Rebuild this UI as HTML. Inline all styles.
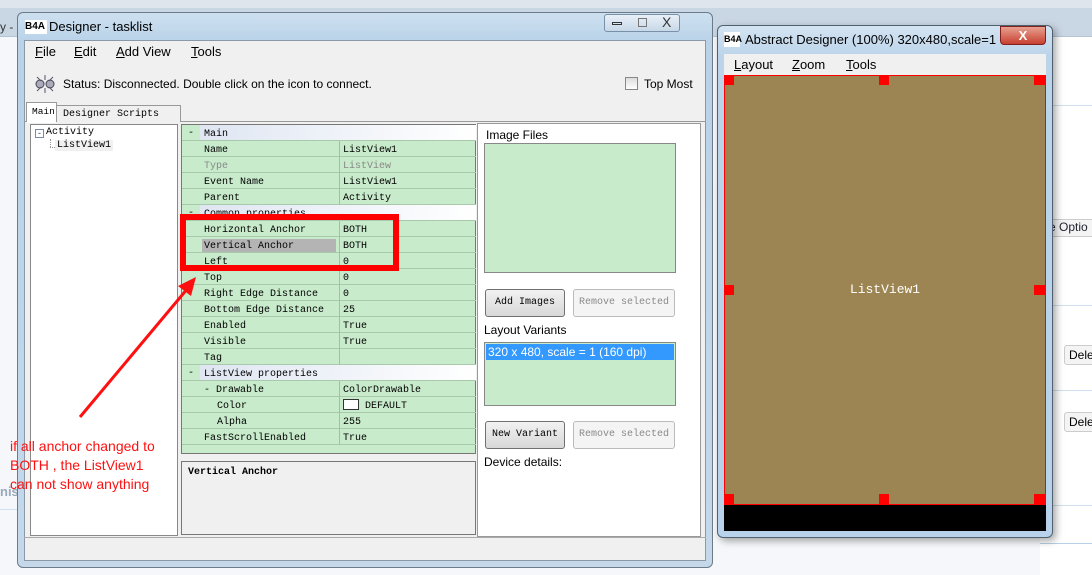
<!DOCTYPE html>
<html><head><meta charset="utf-8"><style>
*{margin:0;padding:0;box-sizing:border-box}
body{width:1092px;height:575px;position:relative;overflow:hidden;background:#f5f7fa;font-family:"Liberation Sans",sans-serif;font-size:12px;color:#000}
.a{position:absolute}
.mono{font-family:"Liberation Mono",monospace;font-size:10px}
.row{position:absolute;left:0;width:294px;height:16px;border-bottom:1px solid #a9c9ad}
.row .n{position:absolute;left:22px;top:4px}
.row .v{position:absolute;left:161px;top:4px}
.row .sep{position:absolute;left:157px;top:0;width:1px;height:16px;background:#a9b9aa}
.hdr{background:linear-gradient(90deg,#c8ebcb 18px,#dfe6f2 18px,#fff);}
.hdr .m{position:absolute;left:6px;top:3px}
.btn{position:absolute;border:1px solid #707070;border-radius:3px;background:linear-gradient(#f2f2f2,#d8d8d8);text-align:center;font-family:"Liberation Mono",monospace;font-size:10px;line-height:25px}
.dis{border-color:#bbb;background:#f4f4f4;color:#8a8a8a}
</style></head><body>
<div class="a" style="left:0;top:0;width:1092px;height:8px;background:#dfe5ec"></div>
<div class="a" style="left:0;top:8px;width:1092px;height:28px;background:#c9d6e3"></div>
<div class="a" style="left:0;top:36px;width:1092px;height:1px;background:#b4c4d4"></div>
<div class="a" style="left:0;top:20px;font-size:12px;color:#333">y -</div>
<div class="a" style="left:1040px;top:37px;width:52px;height:538px;background:#fff"></div>
<div class="a" style="left:1040px;top:105px;width:52px;height:1px;background:#cfe0f0"></div>
<div class="a" style="left:1040px;top:305px;width:52px;height:1px;background:#cfe0f0"></div>
<div class="a" style="left:1040px;top:390px;width:52px;height:1px;background:#cfe0f0"></div>
<div class="a" style="left:1040px;top:505px;width:52px;height:1px;background:#cfe0f0"></div>
<div class="a" style="left:1040px;top:543px;width:52px;height:1px;background:#b8d0e6"></div>
<div class="a" style="left:1048px;top:219px;width:50px;height:18px;border:1px solid #ccc;border-radius:3px;background:#f4f4f4;font-size:12px;color:#223">e Optio</div>
<div class="a" style="left:1064px;top:345px;width:40px;height:20px;border:1px solid #ccc;border-radius:3px;background:#f4f4f4;font-size:12px;padding:2px 4px">Dele</div>
<div class="a" style="left:1064px;top:412px;width:40px;height:20px;border:1px solid #ccc;border-radius:3px;background:#f4f4f4;font-size:12px;padding:2px 4px">Dele</div>
<div class="a" style="left:0;top:509px;width:20px;height:1px;background:#cfe0f0"></div>
<div class="a" style="left:0;top:484px;color:#9ab;font-weight:bold;font-size:13px">nis</div>

<div class="a" style="left:17px;top:12px;width:696px;height:556px;border:1px solid #6d7a88;border-radius:6px;background:linear-gradient(#cde0f0,#b9d2e8 30px,#c4d8ea)"></div>
<div class="a" style="left:25px;top:20px;width:22px;height:14px;background:#fff;font-size:10px;font-weight:bold;line-height:14px">B4A</div>
<div class="a" style="left:49px;top:19px;font-size:13px">Designer - tasklist</div>
<div class="a" style="left:604px;top:14px;width:76px;height:18px;border:1px solid #7890a8;border-radius:3px;background:linear-gradient(#e8f0f8,#c8d8e8)"></div>
<div class="a" style="left:612px;top:22px;width:10px;height:3px;border:1px solid #333"></div>
<div class="a" style="left:638px;top:18px;width:9px;height:9px;border:1px solid #777"></div>
<div class="a" style="left:662px;top:14px;font-size:14px;color:#333">X</div>
<div class="a" style="left:24px;top:40px;width:682px;height:521px;background:#f0f0f0;border:1px solid #8a98a8"></div>
<div class="a" style="left:35px;top:44px;font-size:13px"><u>F</u>ile</div>
<div class="a" style="left:74px;top:44px;font-size:13px"><u>E</u>dit</div>
<div class="a" style="left:116px;top:44px;font-size:13px"><u>A</u>dd View</div>
<div class="a" style="left:191px;top:44px;font-size:13px"><u>T</u>ools</div>
<svg class="a" style="left:31px;top:73px" width="30" height="22"><circle cx="9" cy="11" r="4" fill="#aab" stroke="#445"/><circle cx="19" cy="11" r="4" fill="#aab" stroke="#445"/><path d="M14 2v5M14 15v5M6 4l4 4M22 4l-4 4M6 18l4-4M22 18l-4-4" stroke="#556"/></svg>
<div class="a" style="left:63px;top:77px;font-size:12px">Status: Disconnected. Double click on the icon to connect.</div>
<div class="a" style="left:625px;top:77px;width:13px;height:13px;border:1px solid #888;background:linear-gradient(#ddd,#fff)"></div>
<div class="a" style="left:644px;top:77px;font-size:12px">Top Most</div>
<div class="a" style="left:24px;top:121px;width:682px;height:1px;background:#999"></div>
<div class="a mono" style="left:56px;top:105px;width:125px;height:17px;border:1px solid #999;border-bottom:none;padding:3px 0 0 6px;background:#f0f0f0">Designer Scripts</div>
<div class="a mono" style="left:26px;top:102px;width:31px;height:20px;border:1px solid #999;border-bottom:none;padding:3px 0 0 5px;background:#fff;font-size:9.5px">Main</div>
<div class="a" style="left:27px;top:121px;width:29px;height:2px;background:#fff"></div>
<div class="a" style="left:30px;top:124px;width:148px;height:412px;background:#fff;border:1px solid #888"></div>
<div class="a" style="left:35px;top:129px;width:9px;height:9px;border:1px solid #7a8aa8;font-size:9px;line-height:6px;text-align:center;color:#246">-</div>
<div class="a mono" style="left:46px;top:127px">Activity</div>
<div class="a" style="left:50px;top:139px;width:1px;height:8px;border-left:1px dotted #999"></div>
<div class="a" style="left:50px;top:147px;width:5px;height:1px;border-top:1px dotted #999"></div>
<div class="a mono" style="left:55px;top:140px;background:#f0f0f0;padding:0 2px">ListView1</div>

<div class="a mono" style="left:181px;top:124px;width:295px;height:330px;background:#c8ebcb;border:1px solid #777">
<div class="row hdr" style="top:0"><span class="m">-</span><span class="n">Main</span></div>
<div class="row" style="top:16px"><span class="n">Name</span><span class="sep"></span><span class="v">ListView1</span></div>
<div class="row" style="top:32px;color:#888"><span class="n">Type</span><span class="sep"></span><span class="v">ListView</span></div>
<div class="row" style="top:48px"><span class="n">Event Name</span><span class="sep"></span><span class="v">ListView1</span></div>
<div class="row" style="top:64px"><span class="n">Parent</span><span class="sep"></span><span class="v">Activity</span></div>
<div class="row hdr" style="top:80px"><span class="m">-</span><span class="n">Common properties</span></div>
<div class="row" style="top:96px"><span class="n">Horizontal Anchor</span><span class="sep"></span><span class="v">BOTH</span></div>
<div class="row" style="top:112px"><span class="n" style="background:#b4b4b4;left:20px;top:2px;width:134px;padding:2px 0 0 2px;height:13px">Vertical Anchor</span><span class="sep"></span><span class="v">BOTH</span></div>
<div class="row" style="top:128px"><span class="n">Left</span><span class="sep"></span><span class="v">0</span></div>
<div class="row" style="top:144px"><span class="n">Top</span><span class="sep"></span><span class="v">0</span></div>
<div class="row" style="top:160px"><span class="n">Right Edge Distance</span><span class="sep"></span><span class="v">0</span></div>
<div class="row" style="top:176px"><span class="n">Bottom Edge Distance</span><span class="sep"></span><span class="v">25</span></div>
<div class="row" style="top:192px"><span class="n">Enabled</span><span class="sep"></span><span class="v">True</span></div>
<div class="row" style="top:208px"><span class="n">Visible</span><span class="sep"></span><span class="v">True</span></div>
<div class="row" style="top:224px"><span class="n">Tag</span><span class="sep"></span><span class="v"></span></div>
<div class="row hdr" style="top:240px"><span class="m">-</span><span class="n">ListView properties</span></div>
<div class="row" style="top:256px"><span class="n">- Drawable</span><span class="sep"></span><span class="v">ColorDrawable</span></div>
<div class="row" style="top:272px"><span class="n" style="left:35px">Color</span><span class="sep"></span><span class="v" style="top:2px"><span style="display:inline-block;width:16px;height:11px;border:1px solid #333;background:#fff;vertical-align:-2px;margin-right:6px"></span>DEFAULT</span></div>
<div class="row" style="top:288px"><span class="n" style="left:35px">Alpha</span><span class="sep"></span><span class="v">255</span></div>
<div class="row" style="top:304px"><span class="n">FastScrollEnabled</span><span class="sep"></span><span class="v">True</span></div>
</div>
<div class="a mono" style="left:181px;top:461px;width:295px;height:74px;border:1px solid #777;background:#f0f0f0;font-weight:bold;padding:5px 0 0 6px">Vertical Anchor</div>
<div class="a" style="left:477px;top:123px;width:224px;height:414px;background:#fff;border:1px solid #999"></div>
<div class="a" style="left:486px;top:128px;font-size:12px">Image Files</div>
<div class="a" style="left:484px;top:143px;width:192px;height:130px;background:#c8ebcb;border:1px solid #888"></div>
<div class="btn" style="left:485px;top:289px;width:80px;height:28px">Add Images</div>
<div class="btn dis" style="left:573px;top:289px;width:102px;height:28px">Remove selected</div>
<div class="a" style="left:484px;top:323px;font-size:12px">Layout Variants</div>
<div class="a" style="left:484px;top:342px;width:192px;height:64px;background:#c8ebcb;border:1px solid #888"></div>
<div class="a" style="left:486px;top:344px;width:188px;height:16px;background:#3399ff;color:#fff;font-size:12px;padding:1px 0 0 2px">320 x 480, scale = 1 (160 dpi)</div>
<div class="btn" style="left:485px;top:421px;width:80px;height:28px">New Variant</div>
<div class="btn dis" style="left:573px;top:421px;width:102px;height:28px">Remove selected</div>
<div class="a" style="left:484px;top:455px;font-size:12px">Device details:</div>
<div class="a" style="left:24px;top:537px;width:682px;height:1px;background:#aaa"></div>

<div class="a" style="left:180px;top:214px;width:219px;height:57px;border:6px solid #ff0000"></div>
<svg class="a" style="left:0;top:0" width="420" height="575"><line x1="80" y1="417" x2="188" y2="288" stroke="#ff1010" stroke-width="3"/><polygon points="196,277 178,286 191,296" fill="#ff1010"/></svg>
<div class="a" style="left:10px;top:437px;color:#ff1010;font-size:14px;line-height:19px">if all anchor changed to<br>BOTH , the ListView1<br>can not show anything</div>

<div class="a" style="left:717px;top:25px;width:336px;height:513px;border:1px solid #50606e;border-radius:6px;background:linear-gradient(#d4e4f2,#bcd4ea 30px,#b8d2ec);box-shadow:3px 3px 8px rgba(0,0,0,.35)"></div>
<div class="a" style="left:724px;top:32px;width:16px;height:15px;background:#fff;font-size:9px;font-weight:bold;line-height:15px">B4A</div>
<div class="a" style="left:745px;top:32px;font-size:13px">Abstract Designer (100%) 320x480,scale=1</div>
<div class="a" style="left:1000px;top:26px;width:46px;height:19px;border:1px solid #802020;border-radius:0 0 4px 4px;background:linear-gradient(#e8a090,#c84030);color:#fff;font-weight:bold;text-align:center;font-size:13px;line-height:17px">X</div>
<div class="a" style="left:724px;top:54px;width:322px;height:21px;background:#f0f0f0"></div>
<div class="a" style="left:734px;top:57px;font-size:13px"><u>L</u>ayout</div>
<div class="a" style="left:792px;top:57px;font-size:13px"><u>Z</u>oom</div>
<div class="a" style="left:846px;top:57px;font-size:13px"><u>T</u>ools</div>
<div class="a" style="left:724px;top:75px;width:322px;height:456px;background:#000"></div>
<div class="a" style="left:724px;top:75px;width:322px;height:430px;background:#9c8552;border:1px solid #f00"></div>
<div class="a" style="left:724px;top:75px;width:10px;height:10px;background:#f00"></div>
<div class="a" style="left:879px;top:75px;width:10px;height:10px;background:#f00"></div>
<div class="a" style="left:1034px;top:75px;width:11px;height:10px;background:#f00"></div>
<div class="a" style="left:724px;top:285px;width:10px;height:10px;background:#f00"></div>
<div class="a" style="left:1034px;top:285px;width:11px;height:10px;background:#f00"></div>
<div class="a" style="left:724px;top:494px;width:10px;height:10px;background:#f00"></div>
<div class="a" style="left:879px;top:494px;width:10px;height:10px;background:#f00"></div>
<div class="a" style="left:1034px;top:494px;width:11px;height:10px;background:#f00"></div>
<div class="a mono" style="left:724px;top:282px;width:322px;text-align:center;color:#fff;font-size:13px">ListView1</div>
</body></html>
